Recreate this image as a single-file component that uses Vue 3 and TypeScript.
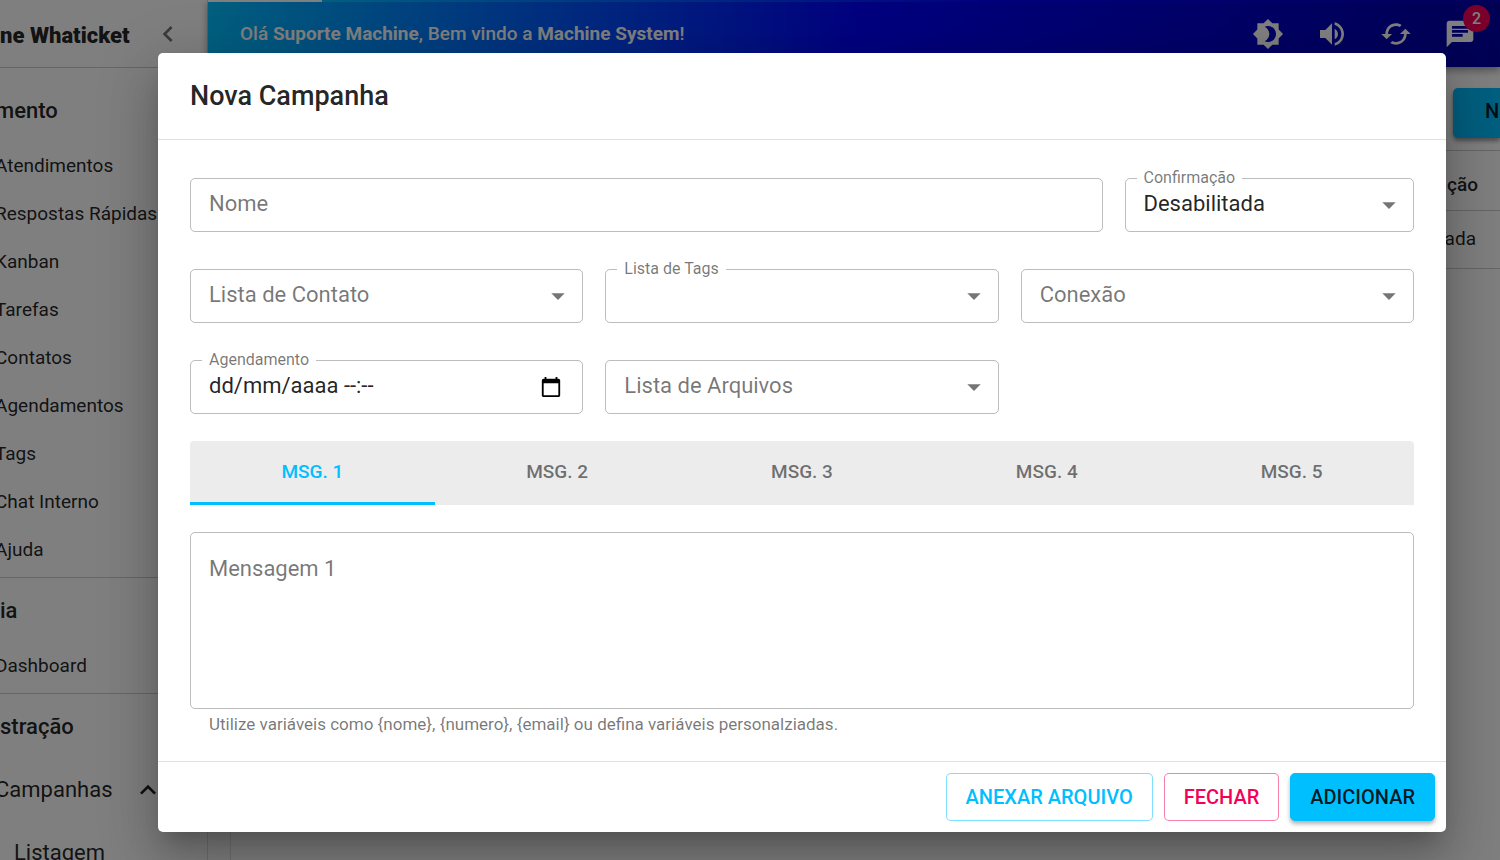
<script setup lang="ts">
import { ref } from 'vue'

interface Section {
  title: string
  shifted: boolean
  items: string[]
}

const sections: Section[] = [
  {
    title: 'mento',
    shifted: true,
    items: ['Atendimentos', 'Respostas Rápidas', 'Kanban', 'Tarefas', 'Contatos', 'Agendamentos', 'Tags', 'Chat Interno', 'Ajuda'],
  },
  { title: 'ia', shifted: false, items: ['Dashboard'] },
]

const tabs = [1, 2, 3, 4, 5]
const activeTab = ref(1)
const nome = ref('')
const agendamento = ref('dd/mm/aaaa --:--')
const mensagem = ref('')
</script>

<template>
  <div class="app">
    <aside class="sidebar">
      <div class="brand">
        <span class="brand-name">ne Whaticket</span>
        <button class="plain collapse" type="button" aria-label="Recolher menu">
          <svg width="32" height="32" viewBox="0 0 24 24"><path d="M15.41 7.41 14 6l-6 6 6 6 1.41-1.41L10.83 12z" /></svg>
        </button>
      </div>
      <nav>
        <section v-for="s in sections" :key="s.title" class="group">
          <h2 :class="{ shifted: s.shifted }">{{ s.title }}</h2>
          <a v-for="i in s.items" :key="i" href="#" class="item">{{ i }}</a>
        </section>
        <section class="group">
          <h2>stração</h2>
          <a href="#" class="item parent">
            <span>Campanhas</span>
            <svg width="32" height="32" viewBox="0 0 24 24"><path d="m12 8-6 6 1.41 1.41L12 10.83l4.59 4.58L18 14z" /></svg>
          </a>
          <a href="#" class="item child">Listagem</a>
        </section>
      </nav>
    </aside>

    <div class="content">
      <header class="topbar">
        <p class="greeting">Olá <b>Suporte Machine</b>, Bem vindo a <b>Machine System</b>!</p>
        <div class="tools">
          <button class="plain" type="button" aria-label="Tema">
            <svg width="32" height="32" viewBox="0 0 24 24"><path d="M20 8.69V4h-4.69L12 .69 8.69 4H4v4.69L.69 12 4 15.31V20h4.69L12 23.31 15.31 20H20v-4.69L23.31 12 20 8.69zM12 18c-.89 0-1.74-.2-2.5-.55C11.56 16.5 13 14.42 13 12s-1.44-4.5-3.5-5.45C10.26 6.2 11.11 6 12 6c3.31 0 6 2.69 6 6s-2.69 6-6 6z" /></svg>
          </button>
          <button class="plain" type="button" aria-label="Volume">
            <svg width="32" height="32" viewBox="0 0 24 24"><path d="M3 9v6h4l5 5V4L7 9H3zm13.500 3c0-1.770-1.020-3.290-2.500-4.030v8.050c1.480-.73 2.500-2.250 2.500-4.020zM14 3.230v2.060c2.890.86 5 3.540 5 6.710s-2.110 5.850-5 6.710v2.060c4.010-.91 7-4.490 7-8.770s-2.990-7.860-7-8.770z" /></svg>
          </button>
          <button class="plain" type="button" aria-label="Atualizar">
            <svg width="32" height="32" viewBox="0 0 24 24"><path d="m19 8-4 4h3c0 3.310-2.690 6-6 6-1.010 0-1.970-.25-2.800-.7l-1.460 1.460C8.970 19.540 10.430 20 12 20c4.420 0 8-3.580 8-8h3l-4-4zM6 12c0-3.310 2.690-6 6-6 1.010 0 1.970.25 2.800.7l1.460-1.460C15.030 4.460 13.570 4 12 4c-4.420 0-8 3.580-8 8H1l4 4 4-4H6z" /></svg>
          </button>
          <button class="plain chat" type="button" aria-label="Mensagens">
            <svg width="32" height="32" viewBox="0 0 24 24"><path d="M20 2H4c-1.100 0-1.990.9-1.990 2L2 22l4-4h14c1.100 0 2-.9 2-2V4c0-1.100-.9-2-2-2zM6 9h12v2H6V9zm8 5H6v-2h8v2zm4-6H6V6h12v2z" /></svg>
            <span class="badge">2</span>
          </button>
        </div>
      </header>
      <main class="page">
        <div class="page-actions"><button class="new" type="button">N</button></div>
        <table class="list">
          <thead><tr><th>ção</th></tr></thead>
          <tbody><tr><td>ada</td></tr></tbody>
        </table>
      </main>
    </div>

    <div class="backdrop">
      <form class="dialog" role="dialog" aria-labelledby="dialog-title" @submit.prevent>
        <h1 id="dialog-title">Nova Campanha</h1>
        <div class="body">
          <div class="fields">
            <div class="field wide">
              <input id="nome" v-model="nome" type="text" />
              <label for="nome">Nome</label>
            </div>
            <div class="field narrow">
              <select id="confirmacao"><option>Desabilitada</option></select>
              <label for="confirmacao" class="raised">Confirmação</label>
              <svg class="arrow" width="32" height="32" viewBox="0 0 24 24"><path d="m7 10 5 5 5-5z" /></svg>
            </div>
            <div class="field">
              <select id="contato"><option></option></select>
              <label for="contato">Lista de Contato</label>
              <svg class="arrow" width="32" height="32" viewBox="0 0 24 24"><path d="m7 10 5 5 5-5z" /></svg>
            </div>
            <div class="field">
              <select id="tags"><option></option></select>
              <label for="tags" class="raised">Lista de Tags</label>
              <svg class="arrow" width="32" height="32" viewBox="0 0 24 24"><path d="m7 10 5 5 5-5z" /></svg>
            </div>
            <div class="field">
              <select id="conexao"><option></option></select>
              <label for="conexao">Conexão</label>
              <svg class="arrow" width="32" height="32" viewBox="0 0 24 24"><path d="m7 10 5 5 5-5z" /></svg>
            </div>
            <div class="field">
              <input id="agendamento" v-model="agendamento" type="text" />
              <label for="agendamento" class="raised">Agendamento</label>
              <button class="plain calendar" type="button" aria-label="Abrir calendário">
                <svg width="22" height="22" viewBox="0 0 24 24"><path d="M20 3h-1V1h-2v2H7V1H5v2H4c-1.100 0-2 .9-2 2v16c0 1.100.9 2 2 2h16c1.100 0 2-.9 2-2V5c0-1.100-.9-2-2-2zm0 18H4V8h16v13z" /></svg>
              </button>
            </div>
            <div class="field">
              <select id="arquivos"><option></option></select>
              <label for="arquivos">Lista de Arquivos</label>
              <svg class="arrow" width="32" height="32" viewBox="0 0 24 24"><path d="m7 10 5 5 5-5z" /></svg>
            </div>
          </div>

          <div class="tabs" role="tablist">
            <button
              v-for="t in tabs"
              :key="t"
              type="button"
              role="tab"
              :aria-selected="activeTab === t"
              :class="['tab', { active: activeTab === t }]"
              @click="activeTab = t"
            >MSG. {{ t }}</button>
          </div>

          <div class="field message">
            <textarea id="mensagem" v-model="mensagem" aria-describedby="ajuda-mensagem"></textarea>
            <label for="mensagem">Mensagem {{ activeTab }}</label>
          </div>
          <p id="ajuda-mensagem" class="helper">Utilize variáveis como {nome}, {numero}, {email} ou defina variáveis personalziadas.</p>
        </div>
        <footer class="actions">
          <button class="btn attach" type="button">ANEXAR ARQUIVO</button>
          <button class="btn close" type="button">FECHAR</button>
          <button class="btn add" type="submit">ADICIONAR</button>
        </footer>
      </form>
    </div>
  </div>
</template>

<style>
body {
  margin: 0;
}
</style>

<style scoped>
* {
  box-sizing: border-box;
}
.app {
  position: relative;
  display: flex;
  height: 100vh;
  overflow: hidden;
  background: #fff;
  color: rgba(0, 0, 0, 0.87);
  font-family: Roboto, "Liberation Sans", sans-serif;
}
button,
input,
select,
textarea {
  font: inherit;
  color: inherit;
}
svg {
  display: block;
  fill: currentColor;
}
.plain {
  display: block;
  padding: 0;
  border: 0;
  background: none;
}
.sidebar {
  flex: 0 0 208px;
  overflow: hidden;
  border-right: 1px solid rgba(0, 0, 0, 0.12);
}
.brand {
  display: flex;
  align-items: center;
  justify-content: space-between;
  height: 68px;
  padding-right: 23px;
  border-bottom: 1px solid rgba(0, 0, 0, 0.2);
}
.brand-name {
  padding-top: 3px;
  font-size: 22px;
  font-weight: 900;
  white-space: nowrap;
}
.collapse {
  color: rgba(0, 0, 0, 0.54);
}
nav {
  padding-top: 10px;
}
.group {
  border-bottom: 1px solid rgba(0, 0, 0, 0.2);
}
.group h2 {
  height: 64px;
  margin: 0;
  padding-top: 3px;
  font-size: 22px;
  font-weight: 500;
  line-height: 60px;
}
.group .shifted {
  margin-left: -5px;
}
.item {
  display: block;
  height: 48px;
  margin-left: -5px;
  color: inherit;
  font-size: 19px;
  line-height: 48px;
  text-decoration: none;
  white-space: nowrap;
}
.group .item:last-child {
  margin-bottom: 3px;
}
.parent {
  display: flex;
  align-items: center;
  justify-content: space-between;
  height: 64px;
  padding-right: 43px;
  font-size: 22px;
}
.child {
  padding-left: 19px;
  height: 64px;
  font-size: 22px;
  line-height: 62px;
}
.content {
  flex: 1;
  min-width: 0;
}
.topbar {
  position: relative;
  display: flex;
  align-items: center;
  justify-content: space-between;
  height: 67px;
  padding-left: 32px;
  background: linear-gradient(to right, #00bfff, #0000ff 51%, #0000a8);
  box-shadow: 0 3px 8px rgba(0, 0, 0, 0.4);
  color: #fff;
}
.topbar::before {
  content: "";
  position: absolute;
  top: 0;
  left: 0;
  right: 0;
  height: 2px;
  background: linear-gradient(to right, #fff 114px, #00bfff 114px, #0000ff 60%, #0000b8);
}
.greeting {
  margin: 0;
  padding-bottom: 1px;
  font-size: 19px;
  font-weight: 500;
}
.greeting b {
  font-weight: 700;
}
.tools {
  display: flex;
  gap: 32px;
  padding-right: 24px;
}
.chat {
  position: relative;
}
.badge {
  position: absolute;
  top: -13px;
  right: -14px;
  width: 27px;
  height: 27px;
  border-radius: 50%;
  background: #f50057;
  font-size: 16px;
  font-weight: 500;
  line-height: 27px;
  text-align: center;
}
.page {
  height: 100%;
  margin-left: 22px;
  border-left: 1px solid rgba(0, 0, 0, 0.12);
}
.page-actions {
  display: flex;
  justify-content: flex-end;
  padding: 21px 0 12px;
}
.new {
  width: 47px;
  height: 50px;
  padding: 0 0 4px 32px;
  border: 0;
  border-radius: 5px 0 0 5px;
  background: #00bfff;
  box-shadow: 0 3px 4px rgba(0, 0, 0, 0.4);
  font-size: 20px;
  font-weight: 500;
  text-align: left;
}
.list {
  width: 100%;
  border-collapse: collapse;
  border-top: 1px solid rgba(0, 0, 0, 0.2);
  font-size: 19px;
  text-align: right;
}
.list th,
.list td {
  height: 58px;
  padding: 0 24px 2px 0;
  border-bottom: 1px solid rgba(0, 0, 0, 0.2);
  font-weight: 400;
}
.list th {
  height: 60px;
  padding: 8px 22px 0 0;
  font-weight: 500;
}
.backdrop {
  position: absolute;
  inset: 0;
  padding: 53px 54px 28px 158px;
  background: rgba(0, 0, 0, 0.5);
}
.dialog {
  display: flex;
  flex-direction: column;
  height: 100%;
  border-radius: 5px;
  background: #fff;
  box-shadow: 0 15px 20px -9px rgba(0, 0, 0, 0.2), 0 32px 50px 4px rgba(0, 0, 0, 0.14), 0 12px 60px 10px rgba(0, 0, 0, 0.12);
}
.dialog h1 {
  margin: 0;
  padding: 22px 32px;
  border-bottom: 1px solid rgba(0, 0, 0, 0.12);
  font-size: 27px;
  font-weight: 500;
  line-height: 42px;
}
.body {
  flex: 1;
  padding: 38px 32px 0;
}
.fields {
  display: grid;
  grid-template-columns: repeat(12, 1fr);
  column-gap: 22px;
  row-gap: 37px;
}
.field {
  position: relative;
  grid-column: span 4;
}
.wide {
  grid-column: span 9;
}
.narrow {
  grid-column: span 3;
}
.field input,
.field select,
.field textarea {
  display: block;
  width: 100%;
  height: 54px;
  padding: 0 18px 3px;
  border: 1px solid rgba(0, 0, 0, 0.26);
  border-radius: 5px;
  background: transparent;
  appearance: none;
  font-size: 22px;
  outline: none;
}
.field label {
  position: absolute;
  top: 10px;
  left: 19px;
  color: rgba(0, 0, 0, 0.54);
  font-size: 22px;
  line-height: 32px;
  pointer-events: none;
}
.field .raised {
  top: -10px;
  left: 12px;
  padding: 0 7px;
  background: #fff;
  font-size: 16px;
  line-height: 20px;
}
.arrow {
  position: absolute;
  top: 11px;
  right: 9px;
  color: rgba(0, 0, 0, 0.54);
  pointer-events: none;
}
.calendar {
  position: absolute;
  top: 16px;
  right: 21px;
  color: #000;
}
.tabs {
  display: grid;
  grid-template-columns: repeat(5, 1fr);
  margin: 27px 0;
  border-radius: 4px 4px 0 0;
  background: #ececec;
}
.tab {
  height: 64px;
  padding: 0;
  border: 0;
  border-bottom: 3px solid transparent;
  background: none;
  color: rgba(0, 0, 0, 0.54);
  font-size: 19px;
  font-weight: 500;
}
.active {
  border-color: #00bfff;
  color: #00bfff;
}
.field textarea {
  height: 177px;
  padding: 24px 18px;
  resize: none;
}
.message label {
  top: 21px;
}
.helper {
  margin: 4px 19px 0;
  color: rgba(0, 0, 0, 0.54);
  font-size: 17px;
  line-height: 22px;
}
.actions {
  display: flex;
  justify-content: flex-end;
  gap: 11px;
  padding: 11px;
  border-top: 1px solid rgba(0, 0, 0, 0.12);
}
.btn {
  height: 48px;
  padding: 0 19px 1px;
  border: 1px solid;
  border-radius: 5px;
  background: #fff;
  font-size: 20px;
  font-weight: 500;
}
.attach {
  border-color: rgba(0, 191, 255, 0.5);
  color: #00bfff;
}
.close {
  border-color: rgba(245, 0, 87, 0.5);
  color: #f50057;
}
.add {
  border-color: #00bfff;
  background: #00bfff;
  box-shadow: 0 3px 4px rgba(0, 0, 0, 0.3);
  color: rgba(0, 0, 0, 0.87);
}
</style>
